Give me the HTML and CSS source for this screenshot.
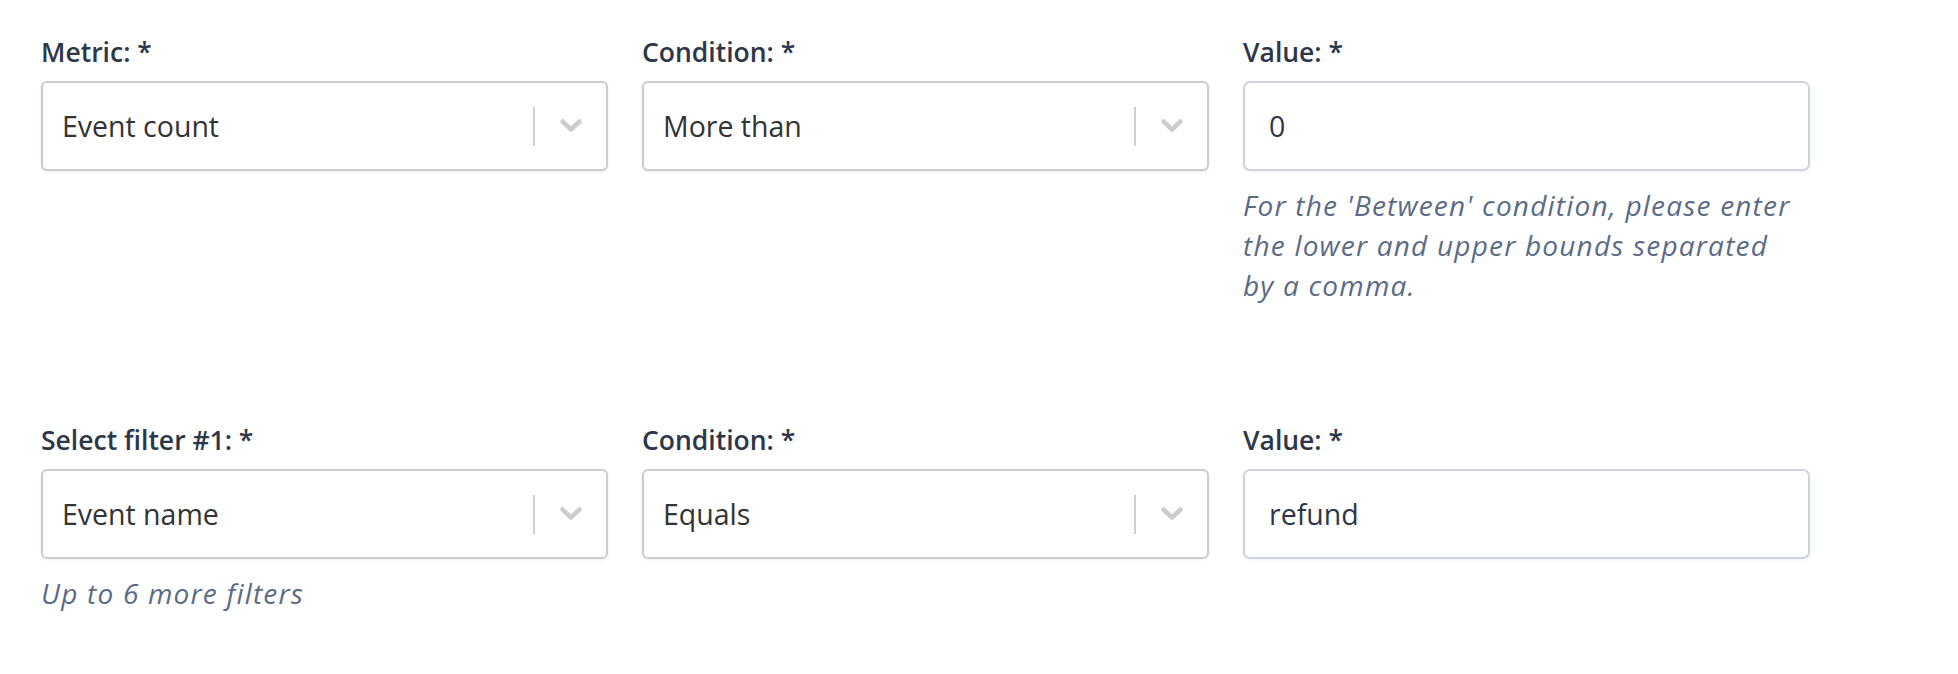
FILE: index.html
```html
<!DOCTYPE html>
<html lang="en">
<head>
<meta charset="utf-8">
<title>Filters</title>
<link rel="stylesheet" href="styles.css">
</head>
<body>
<div class="form">
  <div class="row row-main">
    <div class="field">
      <label class="label">Metric: *</label>
      <div class="select">
        <div class="select-value">Event count</div>
        <span class="sep"></span>
        <span class="indicator"><svg width="24" height="16" viewBox="0 0 24 16"><polyline points="3.5,3.5 12,11.5 20.5,3.5" fill="none" stroke="#cccccc" stroke-width="4.5" stroke-linecap="round" stroke-linejoin="round"/></svg></span>
      </div>
    </div>
    <div class="field">
      <label class="label">Condition: *</label>
      <div class="select">
        <div class="select-value">More than</div>
        <span class="sep"></span>
        <span class="indicator"><svg width="24" height="16" viewBox="0 0 24 16"><polyline points="3.5,3.5 12,11.5 20.5,3.5" fill="none" stroke="#cccccc" stroke-width="4.5" stroke-linecap="round" stroke-linejoin="round"/></svg></span>
      </div>
    </div>
    <div class="field">
      <label class="label">Value: *</label>
      <input class="input" type="text" value="0">
      <p class="help">For the 'Between' condition, please enter<br>the lower and upper bounds separated<br>by a comma.</p>
    </div>
  </div>
  <div class="row">
    <div class="field">
      <label class="label">Select filter #1: *</label>
      <div class="select">
        <div class="select-value">Event name</div>
        <span class="sep"></span>
        <span class="indicator"><svg width="24" height="16" viewBox="0 0 24 16"><polyline points="3.5,3.5 12,11.5 20.5,3.5" fill="none" stroke="#cccccc" stroke-width="4.5" stroke-linecap="round" stroke-linejoin="round"/></svg></span>
      </div>
      <p class="help">Up to 6 more filters</p>
    </div>
    <div class="field">
      <label class="label">Condition: *</label>
      <div class="select">
        <div class="select-value">Equals</div>
        <span class="sep"></span>
        <span class="indicator"><svg width="24" height="16" viewBox="0 0 24 16"><polyline points="3.5,3.5 12,11.5 20.5,3.5" fill="none" stroke="#cccccc" stroke-width="4.5" stroke-linecap="round" stroke-linejoin="round"/></svg></span>
      </div>
    </div>
    <div class="field">
      <label class="label">Value: *</label>
      <input class="input" type="text" value="refund">
    </div>
  </div>
</div>
</body>
</html>
```

FILE: styles.css
```css
* { box-sizing: border-box; }

html, body {
  margin: 0;
  background: #ffffff;
}

body {
  font-family: "Open Sans", "Liberation Sans", sans-serif;
}

.form {
  padding: 35px 0 0 41px;
}

.row {
  display: grid;
  grid-template-columns: 567px 567px 567px;
  column-gap: 34px;
  align-items: start;
}

.row-main {
  margin-bottom: 118px;
}

.field {
  display: flex;
  flex-direction: column;
}

.label {
  display: block;
  font-size: 26.5px;
  font-weight: 600;
  line-height: 34px;
  color: #2d3748;
  margin-bottom: 12px;
}

.select {
  display: flex;
  align-items: center;
  height: 90px;
  border: 2px solid #cccccc;
  border-radius: 6px;
  background: #ffffff;
  box-shadow: 0 1px 3px rgba(0, 0, 0, 0.08);
}

.select-value {
  flex: 1;
  padding-left: 19px;
  font-size: 28.5px;
  color: #333333;
}

.sep {
  width: 2px;
  height: 39px;
  background: #d0d0d0;
}

.indicator {
  display: flex;
  align-items: center;
  padding: 0 23px 0 24px;
}

.indicator svg {
  display: block;
}

.input {
  display: block;
  width: 100%;
  height: 90px;
  border: 2px solid #cbd5e0;
  border-radius: 7px;
  padding: 0 0 0 24px;
  font-family: "Open Sans", "Liberation Sans", sans-serif;
  font-size: 28.5px;
  color: #2d3748;
  background: #ffffff;
  box-shadow: 0 1px 3px rgba(0, 0, 0, 0.06);
  outline: none;
}

.help {
  margin: 14px 0 0 0;
  font-size: 28px;
  font-style: italic;
  letter-spacing: 1.2px;
  line-height: 40px;
  color: #5b6b86;
}
```
